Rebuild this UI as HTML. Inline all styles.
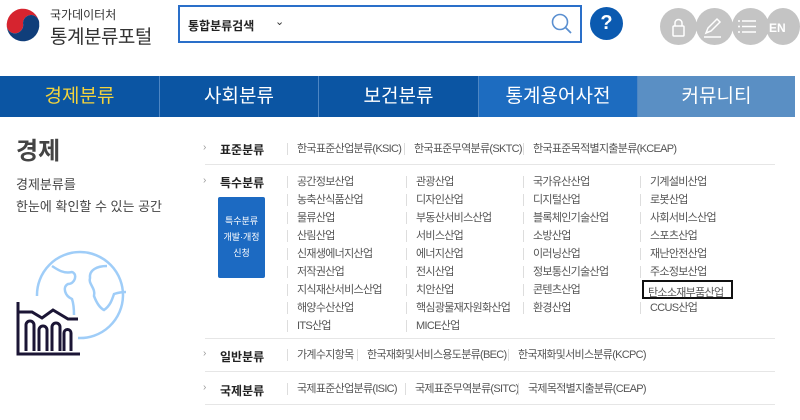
<!DOCTYPE html>
<html><head><meta charset="utf-8"><style>
*{margin:0;padding:0;box-sizing:border-box}
body{width:800px;height:420px;background:#fff;font-family:"Liberation Sans","Noto Sans CJK KR",sans-serif;position:relative;overflow:hidden;color:#555}
.a{position:absolute;white-space:nowrap}
.nav{position:absolute;top:76px;left:0;height:41px;display:flex}
.nav div{height:41px;line-height:41px;text-align:center;color:#fff;font-size:19px;border-right:1px solid #4d86c4}
.it{position:absolute;font-size:11px;color:#555;padding-left:9px;border-left:1px solid #ddd;line-height:12px;white-space:nowrap;letter-spacing:-0.7px}
.lb{position:absolute;font-size:12px;font-weight:bold;color:#222;left:220px}
.ar{position:absolute;left:203px;font-size:10px;color:#999}
.ln{position:absolute;left:205px;width:570px;height:1px;background:#e6e6e6}
.c{position:absolute;width:37px;height:37px;border-radius:50%;background:#c4c4c4;top:8px}
</style></head><body>
<svg class="a" style="left:3px;top:5px" width="40" height="40" viewBox="0 0 42 42">
<path d="M4 23 A17 17 0 0 1 38 19 A8.5 8.5 0 0 0 21 19 A8.5 8.5 0 0 1 4 23Z" fill="#d6242f"/>
<path d="M4 23 A8.5 8.5 0 0 0 21 19 A8.5 8.5 0 0 1 38 19 A17 17 0 0 1 4 23Z" fill="#103e7a"/>
</svg>
<div class="a" style="left:50px;top:6px;font-size:12px;color:#333">국가데이터처</div>
<div class="a" style="left:50px;top:22px;font-size:19px;color:#333;letter-spacing:-0.5px">통계분류포털</div>
<div class="a" style="left:178px;top:5px;width:404px;height:38px;border:2px solid #2a6fc9;background:#fff"></div>
<div class="a" style="left:188px;top:17px;font-size:12px;font-weight:bold;color:#222">통합분류검색</div>
<div class="a" style="left:275px;top:15px;font-size:11px;color:#333">⌄</div>
<svg class="a" style="left:550px;top:12px" width="24" height="24" viewBox="0 0 24 24"><circle cx="10" cy="10" r="7.5" fill="none" stroke="#5a8fd0" stroke-width="1.6"/><line x1="15.5" y1="15.5" x2="21" y2="21" stroke="#5a8fd0" stroke-width="1.8"/></svg>
<div class="a" style="left:590px;top:7px;width:33px;height:33px;border-radius:50%;background:#0b5ab0;color:#fff;font-weight:bold;font-size:20px;text-align:center;line-height:33px">?</div>
<div class="c" style="left:660px"></div>
<div class="c" style="left:696px"></div>
<div class="c" style="left:732px"></div>
<div class="c" style="left:766px;width:34px"></div>
<svg class="a" style="left:660px;top:8px" width="140" height="37">
<rect x="13" y="18" width="11" height="10" rx="1" fill="none" stroke="#fff" stroke-width="1.5"/><path d="M15 18v-3a3.5 3.5 0 0 1 7 0v3" fill="none" stroke="#fff" stroke-width="1.5"/>
<path d="M46 25l2-5 9-9 3 3-9 9z" fill="none" stroke="#fff" stroke-width="1.5"/><line x1="44" y1="29" x2="61" y2="29" stroke="#fff" stroke-width="1.5"/>
<g stroke="#fff" stroke-width="1.5"><line x1="82" y1="13" x2="96" y2="13"/><line x1="82" y1="18.5" x2="96" y2="18.5"/><line x1="82" y1="24" x2="96" y2="24"/></g>
<g fill="#fff"><circle cx="79" cy="13" r="1"/><circle cx="79" cy="18.5" r="1"/><circle cx="79" cy="24" r="1"/></g>
<text x="109" y="24" fill="#fff" font-size="12" font-weight="bold" font-family="Liberation Sans">EN</text>
</svg>
<div class="nav">
<div style="width:160px;background:#0b55a3;color:#f3d33c">경제분류</div>
<div style="width:159px;background:#0b55a3">사회분류</div>
<div style="width:160px;background:#0b55a3">보건분류</div>
<div style="width:159px;background:#1d6cc0">통계용어사전</div>
<div style="width:157px;background:#5a8fc4;border-right:none">커뮤니티</div>
</div>
<div class="a" style="left:16px;top:131px;font-size:24px;font-weight:bold;color:#444">경제</div>
<div class="a" style="left:16px;top:174px;font-size:13px;color:#444">경제분류를</div>
<div class="a" style="left:16px;top:196px;font-size:13px;color:#444">한눈에 확인할 수 있는 공간</div>
<svg class="a" style="left:0;top:236px" width="140" height="120" viewBox="0 0 140 120">
<g fill="none" stroke="#9fcdf8" stroke-width="2.5"><path d="M78 102 A43 43 0 1 0 37 60"/>
<path d="M52 30c6 4 12 8 20 6 6 2 3 12-4 12-6 3-3 12 4 15 2 6 2 12 2 16"/>
<path d="M107 30c-10 0-18 4-17 12-2 6 6 10 4 18 3 8 6 12 10 14 6-4 8-10 10-16 6-2 10-2 12-2"/></g>
<g fill="none" stroke="#1b1535" stroke-width="3"><path d="M18 66v52h62"/><path d="M18 76h14l10 6 11-8 15 9h10"/>
<path d="M26 115V89a3 3 0 0 1 8 0v26M39 115V94a3 3 0 0 1 8 0v21M52 115V91a3 3 0 0 1 8 0v24M64 115V97a3 3 0 0 1 7 0v18"/></g>
</svg>
<div class="ar" style="top:142px">›</div><div class="lb" style="top:141px">표준분류</div>
<div class="it" style="left:287px;top:143px">한국표준산업분류(KSIC)</div>
<div class="it" style="left:404px;top:143px">한국표준무역분류(SKTC)</div>
<div class="it" style="left:523px;top:143px">한국표준목적별지출분류(KCEAP)</div>
<div class="ln" style="top:164px"></div>
<div class="ar" style="top:175px">›</div><div class="lb" style="top:174px">특수분류</div>
<div class="a" style="left:218px;top:197px;width:47px;height:81px;background:#1c6ac2;border-radius:2px;color:#fff;font-size:9px;text-align:center;line-height:16px;padding-top:16px">특수분류<br>개발·개정<br>신청</div>
<div class="it" style="left:287px;top:176px">공간정보산업</div><div class="it" style="left:406px;top:176px">관광산업</div><div class="it" style="left:523px;top:176px">국가유산산업</div><div class="it" style="left:640px;top:176px">기계설비산업</div>
<div class="it" style="left:287px;top:194px">농축산식품산업</div><div class="it" style="left:406px;top:194px">디자인산업</div><div class="it" style="left:523px;top:194px">디지털산업</div><div class="it" style="left:640px;top:194px">로봇산업</div>
<div class="it" style="left:287px;top:212px">물류산업</div><div class="it" style="left:406px;top:212px">부동산서비스산업</div><div class="it" style="left:523px;top:212px">블록체인기술산업</div><div class="it" style="left:640px;top:212px">사회서비스산업</div>
<div class="it" style="left:287px;top:230px">산림산업</div><div class="it" style="left:406px;top:230px">서비스산업</div><div class="it" style="left:523px;top:230px">소방산업</div><div class="it" style="left:640px;top:230px">스포츠산업</div>
<div class="it" style="left:287px;top:248px">신재생에너지산업</div><div class="it" style="left:406px;top:248px">에너지산업</div><div class="it" style="left:523px;top:248px">이러닝산업</div><div class="it" style="left:640px;top:248px">재난안전산업</div>
<div class="it" style="left:287px;top:266px">저작권산업</div><div class="it" style="left:406px;top:266px">전시산업</div><div class="it" style="left:523px;top:266px">정보통신기술산업</div><div class="it" style="left:640px;top:266px">주소정보산업</div>
<div class="it" style="left:287px;top:284px">지식재산서비스산업</div><div class="it" style="left:406px;top:284px">치안산업</div><div class="it" style="left:523px;top:284px">콘텐츠산업</div>
<div class="a" style="left:642px;top:280px;width:91px;height:19px;border:2px solid #111"></div><div class="a" style="left:648px;top:284px;font-size:11px;color:#555;letter-spacing:-0.7px">탄소소재부품산업</div>
<div class="it" style="left:287px;top:302px">해양수산산업</div><div class="it" style="left:406px;top:302px">핵심광물재자원화산업</div><div class="it" style="left:523px;top:302px">환경산업</div><div class="it" style="left:640px;top:302px">CCUS산업</div>
<div class="it" style="left:287px;top:320px">ITS산업</div><div class="it" style="left:406px;top:320px">MICE산업</div>
<div class="ln" style="top:338px"></div>
<div class="ar" style="top:348px">›</div><div class="lb" style="top:348px">일반분류</div>
<div class="it" style="left:287px;top:349px">가계수지항목</div>
<div class="it" style="left:357px;top:349px">한국재화및서비스용도분류(BEC)</div>
<div class="it" style="left:508px;top:349px">한국재화및서비스분류(KCPC)</div>
<div class="ln" style="top:371px"></div>
<div class="ar" style="top:382px">›</div><div class="lb" style="top:382px">국제분류</div>
<div class="it" style="left:287px;top:383px">국제표준산업분류(ISIC)</div>
<div class="it" style="left:405px;top:383px">국제표준무역분류(SITC)</div>
<div class="it" style="left:518px;top:383px">국제목적별지출분류(CEAP)</div>
<div class="ln" style="top:404px"></div>
</body></html>
